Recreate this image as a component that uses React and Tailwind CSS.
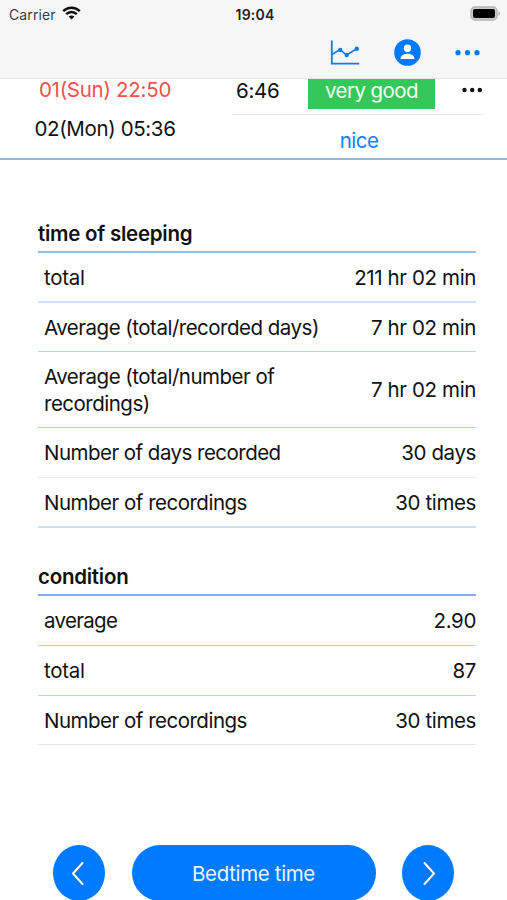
import React from 'react';

const sleepRows = [
  { label: 'total', value: '211 hr 02 min', row: 'h-[50px] border-b-2 border-b-[#cfe1f6]', text: 'tracking-[-0.25px]' },
  { label: 'Average (total/recorded days)', value: '7 hr 02 min', row: 'h-[49px] border-b border-b-[#b0d3fa]', text: 'tracking-[-0.5px]' },
  { label: 'Average (total/number of recordings)', value: '7 hr 02 min', row: 'h-[76px] border-b border-b-[#b0d0f6]', text: 'tracking-[-0.5px]' },
  { label: 'Number of days recorded', value: '30 days', row: 'h-[50px] border-b border-b-[#ececee]', text: 'tracking-[-0.53px]' },
  { label: 'Number of recordings', value: '30 times', row: 'h-[50px] border-b-2 border-b-[#cbdef4]', text: 'tracking-[-0.5px]' },
];

const conditionRows = [
  { label: 'average', value: '2.90', row: 'h-[50px] border-b border-b-[#b0d3fa]', text: 'tracking-[-0.7px]' },
  { label: 'total', value: '87', row: 'h-[50px] border-b border-b-[#b0d3fa]', text: 'tracking-[-0.25px]' },
  { label: 'Number of recordings', value: '30 times', row: 'h-[49px] border-b border-b-[#e6e7e9]', text: 'tracking-[-0.5px]' },
];

function StatusBar() {
  return (
    <div className="flex h-7 items-center justify-between pl-[9px] pr-[6px]">
      <div className="flex w-[100px] items-center gap-[6px]">
        <span className="text-[14px] tracking-[0.1px] text-[#3c3c3c]">Carrier</span>
        <svg className="-mt-[3px]" width="19" height="14" viewBox="0 0 19 14" fill="none" stroke="#111" strokeWidth="2.5">
          <path d="M1.2 5.2C5.8 .6 13.2.6 17.8 5.2" />
          <path d="M4.2 8.2c3-2.9 7.6-2.9 10.6 0" />
          <path d="M9.5 13.4 6.6 10.5c1.6-1.5 4.2-1.5 5.8 0z" fill="#111" stroke="none" />
        </svg>
      </div>
      <span className="text-[14px] font-semibold tracking-[0.2px] text-[#222]">19:04</span>
      <div className="flex w-[100px] justify-end">
        <svg width="31" height="16" viewBox="0 0 31 16">
          <rect x="1" y="1" width="26" height="13" rx="4" fill="#ccc" stroke="#b4b4b4" strokeWidth="1.3" />
          <rect x="3" y="3" width="22" height="9" rx="2" fill="#000" />
          <path d="M28.5 5.3c2 .8 2 3.6 0 4.4z" fill="#aaa" />
        </svg>
      </div>
    </div>
  );
}

function Toolbar() {
  return (
    <div className="flex h-[49px] items-center justify-end pr-[26px]">
      <svg width="30" height="28" viewBox="0 0 30 28" fill="none" stroke="#1478f0">
        <path d="M1.8 1.5v23.2h27.4" strokeWidth="1.8" />
        <path d="M2 15.5l8-5 6.5 5.5L26.5 10" strokeWidth="1.5" />
        <g fill="#1478f0" stroke="none">
          <circle cx="10.2" cy="11" r="2.2" />
          <circle cx="16.7" cy="16" r="2.2" />
          <circle cx="26.8" cy="9.8" r="2.2" />
        </g>
      </svg>
      <svg className="ml-[33px]" width="28" height="28" viewBox="0 0 28 28">
        <circle cx="14.5" cy="13.5" r="13.3" fill="#007aff" />
        <circle cx="14.5" cy="9.3" r="3.7" fill="#fff" />
        <path d="M7.5 20.1c.2-7.2 13.8-7.2 14 0z" fill="#fff" />
      </svg>
      <svg className="ml-[34px]" width="26" height="28" viewBox="0 0 26 28" fill="#007aff">
        <circle cx="3" cy="13.7" r="2.6" />
        <circle cx="12.5" cy="13.7" r="2.6" />
        <circle cx="22" cy="13.7" r="2.6" />
      </svg>
    </div>
  );
}

function RecordRow() {
  return (
    <div className="flex h-[81px] border-b-2 border-[#8dbbe6] tracking-[-0.27px]">
      <div className="flex w-[210px] flex-col items-center">
        <p className="h-[39px] leading-[22px] text-[#f4504a]">01(Sun) 22:50</p>
        <p className="leading-[22px] tracking-[-0.36px]">02(Mon) 05:36</p>
      </div>
      <div className="ml-[22px] w-[252px]">
        <div className="flex h-9 border-b border-[#e9e9ea]">
          <p className="w-[76px] pl-1 leading-6">6:46</p>
          <div className="h-[30px] w-[127px] bg-[#34c759] text-center leading-6 tracking-[-0.55px] text-[#f2fff5]">very good</div>
          <svg className="ml-[26px] mt-[7px]" width="22" height="8" viewBox="0 0 22 8" fill="#111">
            <circle cx="3.5" cy="4" r="2.2" />
            <circle cx="11.2" cy="4" r="2.2" />
            <circle cx="18.8" cy="4" r="2.2" />
          </svg>
        </div>
        <p className="pl-[2px] text-center leading-[51px] tracking-[-0.5px] text-[#147efb]">nice</p>
      </div>
    </div>
  );
}

function StatTable({ title, rows, head }) {
  return (
    <section>
      <h2 className={`border-b-2 font-semibold tracking-[-0.25px] ${head}`}>{title}</h2>
      {rows.map((r) => (
        <div key={r.label} className={`flex items-center justify-between pl-[6px] leading-[27px] ${r.row}`}>
          <span className={`max-w-[290px] ${r.text}`}>{r.label}</span>
          <span className="whitespace-nowrap tracking-[-0.38px]">{r.value}</span>
        </div>
      ))}
    </section>
  );
}

function Arrow({ d }) {
  return (
    <button className="flex h-14 w-[52px] items-center justify-center rounded-[50%] bg-[#007aff]">
      <svg width="16" height="24" viewBox="0 0 16 24" fill="none" stroke="#fff" strokeWidth="1.9" strokeLinecap="round" strokeLinejoin="round">
        <path d={d} />
      </svg>
    </button>
  );
}

export default function App() {
  return (
    <div className="flex h-[900px] w-[507px] flex-col overflow-hidden bg-white font-['Inter',sans-serif] text-[20.5px] text-[#111]">
      <header className="h-[79px] shrink-0 border-b border-[#e4e5e5] bg-[#f6f6f6]">
        <StatusBar />
        <Toolbar />
      </header>
      <RecordRow />
      <main className="ml-[38px] w-[438px] pt-[59px]">
        <StatTable title="time of sleeping" rows={sleepRows} head="h-[34px] leading-[29px] border-[#94bce8]" />
        <div className="h-[34px]" />
        <StatTable title="condition" rows={conditionRows} head="h-[34px] leading-[29px] border-[#7fb1e8]" />
      </main>
      <footer className="mt-auto -mb-[1px] flex shrink-0 justify-between px-[53px]">
        <Arrow d="M11.5 2 2 12.5 11.5 23" />
        <button className="h-14 w-[244px] rounded-full bg-[#007aff] pt-[2px] tracking-[-0.35px] text-[#e8f3ff]">Bedtime time</button>
        <Arrow d="M4.5 2 14 12.5 4.5 23" />
      </footer>
    </div>
  );
}
